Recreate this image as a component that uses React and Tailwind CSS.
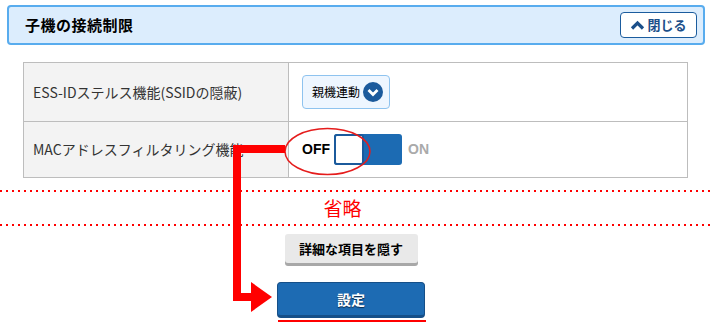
import React from 'react'

const jp = { fontFamily: '"Noto Sans CJK JP", "Noto Sans", sans-serif' }

function DottedLine() {
  return (
    <div className="h-[2px] w-full bg-[repeating-linear-gradient(90deg,#ff0000_0_2px,transparent_2px_6px)]"></div>
  )
}

export default function App() {
  return (
    <div className="relative w-[711px] h-[332px] overflow-hidden bg-white text-[#222]" style={jp}>
      {/* --- HEADER --- */}
      <div className="px-[7px] pt-[5px] w-[712px]">
        <div className="h-[40px] flex items-center justify-between border-2 border-[#58acee] rounded-[4px] bg-[#dcedfd] pl-[16px] pr-[6px]">
          <h1 className="text-[15px] font-bold text-black tracking-[0.5px]">子機の接続制限</h1>
          <button className="w-[77px] h-[26px] flex items-center justify-center gap-[2px] bg-white border border-[#1b5c9e] rounded-[4px] text-[13px] text-[#1b4f8a] font-bold whitespace-nowrap">
            <svg width="15" height="10" viewBox="0 0 15 10" className="shrink-0">
              <path d="M2 8.5 L7.5 3 L13 8.5" fill="none" stroke="#1b4f8a" strokeWidth="3.2" />
            </svg>
            閉じる
          </button>
        </div>
      </div>

      {/* --- SETTINGS TABLE --- */}
      <table className="ml-[23px] mt-[17px] w-[665px] border-collapse text-[14px] text-[#333]">
        <tbody>
          <tr className="h-[59px]">
            <td className="w-[265px] bg-[#f3f3f3] border border-[#bdbdbd] pl-[9px]">ESS-IDステルス機能(SSIDの隠蔽)</td>
            <td className="border border-[#bdbdbd] pl-[13px]">
              <div className="w-[88px] h-[34px] flex items-center justify-between pl-[9px] pr-[6px] bg-[#eef6ff] border border-[#8ec3ef] rounded-[4px] whitespace-nowrap">
                <span className="text-[12px] text-black">親機連動</span>
                <svg width="20" height="20" viewBox="0 0 20 20" className="shrink-0">
                  <circle cx="10" cy="10" r="10" fill="#1b5a9c" />
                  <path d="M5.5 8 L10 12.5 L14.5 8" fill="none" stroke="#fff" strokeWidth="2.8" />
                </svg>
              </div>
            </td>
          </tr>
          <tr className="h-[56px]">
            <td className="bg-[#f3f3f3] border border-[#bdbdbd] pl-[9px]">MACアドレスフィルタリング機能</td>
            <td className="border border-[#bdbdbd] pl-[13px]">
              <div className="flex items-center gap-[4px]">
                <span className="text-[14px] font-bold text-black" style={{ fontFamily: '"Liberation Sans", sans-serif' }}>OFF</span>
                <div className="w-[68px] h-[31px] flex bg-[#1c6bb3] rounded-[3px]">
                  <div className="w-[30px] h-full bg-white border-2 border-[#1b5a9c] rounded-[3px]"></div>
                </div>
                <span className="ml-[2px] text-[14px] font-bold text-[#aaaaaa]" style={{ fontFamily: '"Liberation Sans", sans-serif' }}>ON</span>
              </div>
            </td>
          </tr>
        </tbody>
      </table>

      {/* --- OMITTED SECTION --- */}
      <div className="mt-[12px]">
        <DottedLine />
        <div className="h-[32px] flex items-center justify-center pr-[26px]">
          <span className="text-[19px] text-[#ff0000]">省略</span>
        </div>
        <DottedLine />
      </div>

      {/* --- BUTTONS --- */}
      <div className="flex flex-col items-center pr-[9px]">
        <button className="mt-[8px] w-[133px] h-[29px] bg-[#e9e9e9] rounded-[3px] shadow-[0_3px_0_#a8a8a8] text-[13px] font-bold text-black">
          詳細な項目を隠す
        </button>
        <button className="mt-[19px] w-[148px] h-[36px] bg-[#1d6bb3] border border-[#154f88] border-b-[3px] rounded-[4px] text-[14px] font-bold text-white [text-shadow:0_1px_1px_#0b2b4d]">
          設定
        </button>
        <div className="mt-[2px] w-[148px] h-[2px] bg-[#ff0000] ml-[2px]"></div>
      </div>

      {/* --- ANNOTATION OVERLAY --- */}
      <svg className="absolute left-0 top-0 pointer-events-none" width="711" height="332">
        <ellipse cx="327.5" cy="151.5" rx="42.5" ry="23" fill="none" stroke="#e51c1c" strokeWidth="1.5" />
        <path d="M285 149 L237 149 L237 297 L253 297" fill="none" stroke="#ff0000" strokeWidth="8" strokeLinejoin="miter" />
        <polygon points="251,282 272,297 251,312" fill="#ff0000" />
      </svg>
    </div>
  )
}
